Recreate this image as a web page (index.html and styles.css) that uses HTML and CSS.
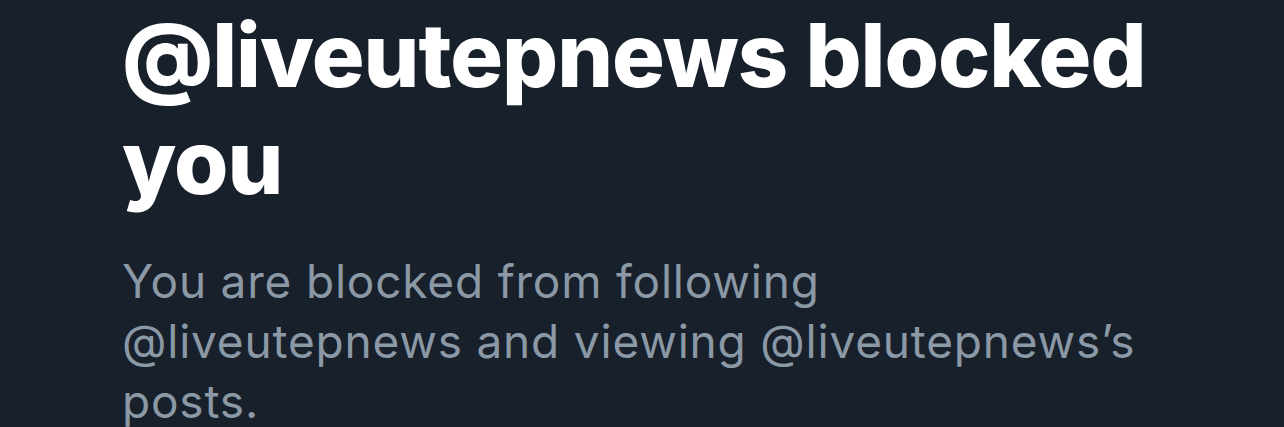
FILE: index.html
```html
<!DOCTYPE html>
<html lang="en">
<head>
  <meta charset="UTF-8" />
  <meta name="viewport" content="width=device-width, initial-scale=1.0"/>
  <title>Blocked</title>
  <link rel="stylesheet" href="styles.css">
</head>
<body>
  <div class="blocked">
    <h1 class="blocked-title">@liveutepnews blocked you</h1>
    <p class="blocked-text">You are blocked from following @liveutepnews and viewing @liveutepnews’s posts.</p>
  </div>
</body>
</html>
```

FILE: styles.css
```css
body {
  margin: 0;
  padding: 0;
  background-color: #18202b;
  font-family: Inter, "Liberation Sans", sans-serif;
  overflow: hidden;
}

.blocked {
  width: 1040px;
  padding: 2px 0 0 122px;
}

.blocked-title {
  margin: 0;
  color: #ffffff;
  font-size: 88px;
  line-height: 107px;
  font-weight: 800;
  letter-spacing: -1px;
}

.blocked-text {
  max-width: 1030px;
  margin: 35px 0 0;
  color: #8b98a5;
  font-size: 46px;
  line-height: 60px;
  font-weight: 400;
  letter-spacing: 0.8px;
}
```
